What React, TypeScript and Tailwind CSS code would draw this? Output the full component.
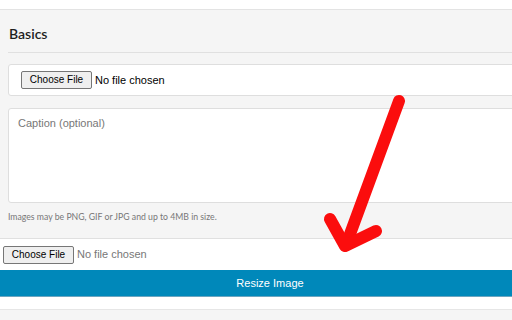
import React from "react";

function FileButton() {
  return (
    <span className="inline-flex items-center justify-center w-[71px] h-[18px] bg-[#efefef] border border-[#767676] rounded-[2px] text-[10px] text-black leading-none font-['Liberation_Sans',Arial,sans-serif]">
      Choose File
    </span>
  );
}

export default function App() {
  return (
    <div className="relative w-[512px] h-[320px] overflow-hidden bg-white font-['Liberation_Sans',Arial,sans-serif]">
      <div className="w-[540px]">
        <div className="h-[9px] bg-white" />
        <section className="bg-[#f5f5f5] border-t border-[#e3e3e3] pl-2">
          <h2 className="h-[42px] pt-[4px] flex items-center pl-[1px] text-[14px] font-semibold text-[#1e1e1e] font-['Lato',sans-serif]">
            Basics
          </h2>
          <div className="h-px bg-[#e0e0e0]" />
          <div className="mt-[11px] h-[32px] bg-white border border-[#dedede] rounded-[3px] flex items-center pl-[12px] gap-[3px]">
            <FileButton />
            <span className="text-[11px] text-black">No file chosen</span>
          </div>
          <div className="mt-[12px] h-[95px] bg-white border border-[#dedede] rounded-[3px] pl-[9px] pt-[8px] text-[11px] leading-[13px] text-[#777]">
            Caption (optional)
          </div>
          <div className="h-[35px] pt-[8px] text-[8.7px] leading-[11px] text-[#777] font-['Lato',sans-serif]">
            Images may be PNG, GIF or JPG and up to 4MB in size.
          </div>
        </section>
        <div className="h-[32px] border-t border-[#e0e0e0] bg-white flex items-center pl-[3px] gap-[3px]">
          <FileButton />
          <span className="text-[11px] text-[#777]">No file chosen</span>
        </div>
        <div className="h-[27px] bg-[#0088ba] border-b border-[#6ba5c0] flex items-center justify-center text-[11px] text-white">
          Resize Image
        </div>
        <div className="h-[12px] bg-white" />
        <div className="h-[20px] border-t border-[#e6e6e6] bg-[#f5f5f5]" />
      </div>
      <svg className="absolute left-0 top-0" width="512" height="320" viewBox="0 0 512 320">
        <g stroke="#fb0d0d" strokeWidth="12" strokeLinecap="round" strokeLinejoin="round" fill="none">
          <line x1="399" y1="101" x2="346" y2="245" />
          <polyline points="330,219 345,246 376,231" />
        </g>
      </svg>
    </div>
  );
}
